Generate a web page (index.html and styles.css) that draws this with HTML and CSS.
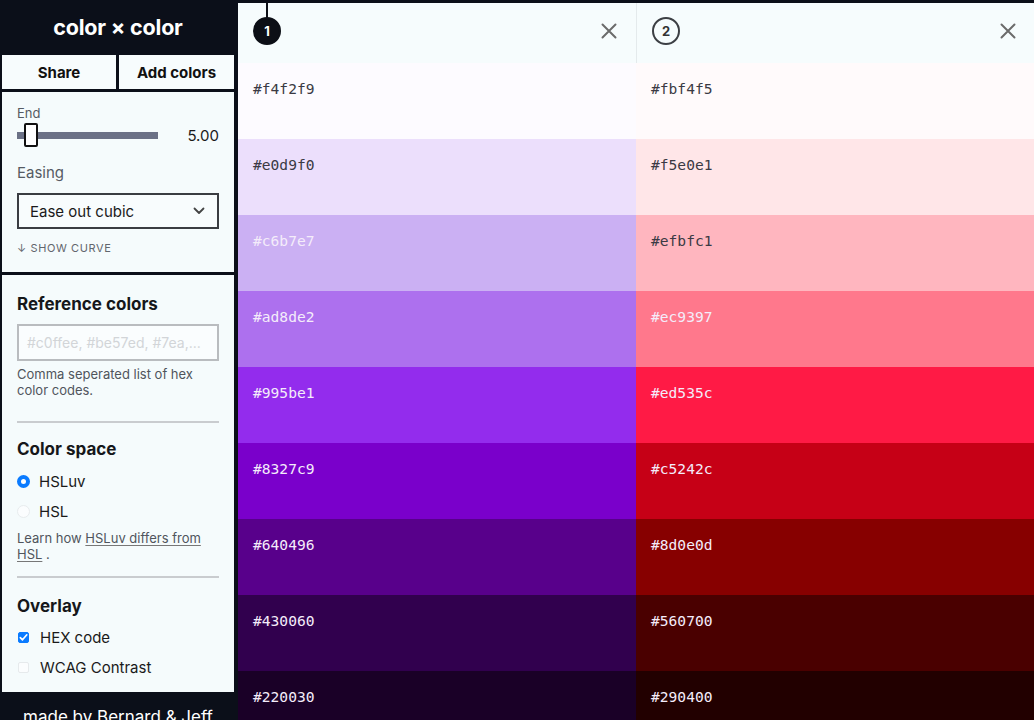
FILE: index.html
```html
<!DOCTYPE html>
<html lang="en">
<head>
<meta charset="utf-8">
<title>color × color</title>
<link rel="stylesheet" href="styles.css">
</head>
<body>
<div class="app">
  <aside class="sidebar">
    <h1 class="title">color × color</h1>
    <div class="actions">
      <button class="btn">Share</button>
      <button class="btn">Add colors</button>
    </div>
    <section class="panel panel-top">
      <div class="label-sm">End</div>
      <div class="slider-row">
        <div class="slider">
          <div class="track"></div>
          <div class="thumb"></div>
        </div>
        <span class="slider-value">5.00</span>
      </div>
      <div class="label">Easing</div>
      <div class="select">
        <span>Ease out cubic</span>
        <svg class="chevron" width="12" height="8" viewBox="0 0 12 8"><path d="M1.5 1.5 L6 6 L10.5 1.5" fill="none" stroke="#444" stroke-width="1.8" stroke-linecap="round" stroke-linejoin="round"/></svg>
      </div>
      <div class="show-curve">↓ SHOW CURVE</div>
    </section>
    <section class="panel panel-bottom">
      <h2 class="heading">Reference colors</h2>
      <div class="input">#c0ffee, #be57ed, #7ea,...</div>
      <p class="help help-input">Comma seperated list of hex color codes.</p>
      <hr class="rule rule-first">
      <h2 class="heading heading-sub">Color space</h2>
      <label class="option first-option"><span class="radio on"></span>HSLuv</label>
      <label class="option"><span class="radio"></span>HSL</label>
      <p class="help help-link">Learn how <a class="link">HSLuv differs from HSL</a> .</p>
      <hr class="rule rule-second">
      <h2 class="heading heading-overlay">Overlay</h2>
      <label class="option overlay-option"><span class="check on"><svg width="11" height="11" viewBox="0 0 11 11"><path d="M2.3 5.6 L4.5 7.8 L8.8 2.8" fill="none" stroke="#fff" stroke-width="1.7" stroke-linecap="round" stroke-linejoin="round"/></svg></span>HEX code</label>
      <label class="option"><span class="check"></span>WCAG Contrast</label>
    </section>
    <div class="footer">made by Bernard &amp; Jeff</div>
  </aside>
  <main class="main">
    <div class="column">
      <div class="col-head">
        <span class="badge active">1</span>
        <svg class="close" width="16" height="16" viewBox="0 0 16 16"><path d="M1.5 1.5 L14.5 14.5 M14.5 1.5 L1.5 14.5" stroke="#6b6b6b" stroke-width="2" stroke-linecap="round"/></svg>
      </div>
      <div class="swatch c1-1 dark-text">#f4f2f9</div>
      <div class="swatch c1-2 dark-text">#e0d9f0</div>
      <div class="swatch c1-3 light-text">#c6b7e7</div>
      <div class="swatch c1-4 light-text">#ad8de2</div>
      <div class="swatch c1-5 light-text">#995be1</div>
      <div class="swatch c1-6 light-text">#8327c9</div>
      <div class="swatch c1-7 light-text">#640496</div>
      <div class="swatch c1-8 light-text">#430060</div>
      <div class="swatch c1-9 light-text">#220030</div>
    </div>
    <div class="column second">
      <div class="col-head">
        <span class="badge">2</span>
        <svg class="close" width="16" height="16" viewBox="0 0 16 16"><path d="M1.5 1.5 L14.5 14.5 M14.5 1.5 L1.5 14.5" stroke="#6b6b6b" stroke-width="2" stroke-linecap="round"/></svg>
      </div>
      <div class="swatch c2-1 dark-text">#fbf4f5</div>
      <div class="swatch c2-2 dark-text">#f5e0e1</div>
      <div class="swatch c2-3 dark-text">#efbfc1</div>
      <div class="swatch c2-4 light-text">#ec9397</div>
      <div class="swatch c2-5 light-text">#ed535c</div>
      <div class="swatch c2-6 light-text">#c5242c</div>
      <div class="swatch c2-7 light-text">#8d0e0d</div>
      <div class="swatch c2-8 light-text">#560700</div>
      <div class="swatch c2-9 light-text">#290400</div>
    </div>
  </main>
</div>
</body>
</html>
```

FILE: styles.css
```css
* { box-sizing: border-box; }
html, body { margin: 0; padding: 0; }
body {
  background: #0b0f19;
  font-family: Inter, "Noto Sans", "Liberation Sans", sans-serif;
  color: #1a1a1a;
  width: 1034px;
  height: 720px;
  overflow: hidden;
}
.app {
  display: flex;
  gap: 2px;
  height: 720px;
}
.sidebar {
  width: 236px;
  flex: none;
  padding: 0 2px;
  display: flex;
  flex-direction: column;
}
.sidebar > * { flex: none; }
.title {
  margin: 0;
  height: 55px;
  display: flex;
  align-items: center;
  justify-content: center;
  color: #fff;
  font-size: 21.5px;
  font-weight: 700;
  letter-spacing: -0.2px;
  padding-bottom: 2px;
}
.actions {
  display: grid;
  grid-template-columns: 114px 115px;
  gap: 3px;
  height: 34px;
}
.btn {
  border: 0;
  background: #f7fcfd;
  font-family: inherit;
  font-size: 15px;
  font-weight: 700;
  color: #111;
  padding: 0;
}
.panel {
  background: #f5fbfc;
  margin-top: 3px;
  padding: 0 15px;
}
.panel-top {
  height: 180px;
  padding-top: 13px;
}
.label-sm {
  font-size: 13px;
  color: #555b63;
  line-height: 16px;
}
.slider-row {
  display: flex;
  align-items: center;
  justify-content: space-between;
  height: 26px;
  margin-top: 1px;
}
.slider {
  position: relative;
  width: 141px;
  height: 26px;
  display: flex;
  align-items: center;
}
.track {
  width: 100%;
  height: 7px;
  background: #6b7186;
}
.thumb {
  position: absolute;
  left: 7px;
  top: 1px;
  width: 14px;
  height: 24px;
  background: #fff;
  border: 2px solid #111;
  border-radius: 2px;
}
.slider-value {
  font-size: 15px;
  color: #1a1a1a;
}
.label {
  font-size: 15px;
  color: #555b63;
  margin-top: 15px;
  line-height: 20px;
}
.select {
  margin-top: 10px;
  height: 36px;
  border: 2px solid #3a3d42;
  background: #f8fcfd;
  display: flex;
  align-items: center;
  justify-content: space-between;
  padding: 0 12px 0 11px;
  font-size: 15px;
  color: #1a1a1a;
}
.show-curve {
  margin-top: 12px;
  font-size: 11px;
  letter-spacing: 0.6px;
  color: #62666d;
}
.panel-bottom {
  height: 417px;
  padding-top: 18px;
}
.heading {
  margin: 0;
  font-size: 17px;
  font-weight: 700;
  color: #15171a;
  line-height: 22px;
}
.heading-sub { margin-top: 15px; }
.heading-overlay { margin-top: 17px; }
.input {
  margin-top: 9px;
  height: 37px;
  border: 2px solid #b9bcbf;
  background: #fafdfe;
  display: flex;
  align-items: center;
  padding: 0 8px;
  font-size: 14px;
  color: #d2d5d8;
  white-space: nowrap;
  overflow: hidden;
}
.help {
  margin: 0;
  font-size: 13px;
  line-height: 16px;
  color: #50555c;
}
.help-input { margin-top: 5px; }
.help-link { margin-top: 4px; }
.link {
  color: #50555c;
  text-decoration: underline;
  text-decoration-color: #777;
  text-underline-offset: 2px;
}
.rule {
  border: 0;
  border-top: 2px solid #c9cccf;
  margin: 0;
}
.rule-first { margin-top: 23px; }
.rule-second { margin-top: 14px; }
.option {
  display: flex;
  align-items: center;
  font-size: 15px;
  color: #1a1a1a;
  height: 30px;
}
.first-option { margin-top: 6px; }
.overlay-option { margin-top: 5px; }
.radio {
  width: 13px;
  height: 13px;
  border-radius: 50%;
  border: 1px solid #e8ecee;
  background: #fbfdfe;
  margin: 0 9px 0 0;
  flex: none;
}
.radio.on {
  border: 4px solid #0a7bff;
  background: #fff;
}
.check {
  width: 11px;
  height: 11px;
  border-radius: 2px;
  border: 1px solid #e6eaec;
  background: #fbfdfe;
  margin: 0 11px 0 1px;
  flex: none;
  display: flex;
}
.check.on {
  background: #0a7bff;
  border-color: #0a7bff;
}
.check svg { margin: -1px; }
.footer {
  color: #fff;
  font-size: 17px;
  line-height: 22px;
  text-align: center;
  margin-top: 14px;
  white-space: nowrap;
}
.main {
  flex: 1;
  display: flex;
  margin-top: 3px;
  min-width: 0;
}
.column {
  flex: 1;
  display: flex;
  flex-direction: column;
  min-width: 0;
}
.col-head {
  height: 60px;
  flex: none;
  background: #f6fcfd;
  display: flex;
  justify-content: space-between;
  align-items: flex-start;
  padding: 14px 19px 0 15px;
}
.second .col-head {
  border-left: 1px solid #e4eaec;
  padding: 14px 18px 0 15px;
}
.badge {
  position: relative;
  width: 28px;
  height: 28px;
  border-radius: 50%;
  border: 2px solid #3c3f44;
  display: flex;
  align-items: center;
  justify-content: center;
  font-size: 13px;
  font-weight: 700;
  color: #333;
}
.badge.active {
  background: #0c0f16;
  border-color: #0c0f16;
  color: #fff;
}
.badge.active::before {
  content: "";
  position: absolute;
  left: 11px;
  bottom: 100%;
  width: 2px;
  height: 17px;
  background: #0c0f16;
}
.close { margin-top: 6px; }
.swatch {
  height: 76px;
  flex: none;
  padding: 16px 15px 0;
  font-family: "DejaVu Sans Mono", "Liberation Mono", monospace;
  font-size: 14.6px;
  line-height: 20px;
}
.dark-text { color: #3b3a44; }
.light-text { color: #f4ecfa; }
.c1-1 { background: #fdfbff; }
.c1-2 { background: #ecdffc; }
.c1-3 { background: #cbb0f3; }
.c1-4 { background: #ad70ee; }
.c1-5 { background: #932ced; }
.c1-6 { background: #7a00cb; }
.c1-7 { background: #58008b; }
.c1-8 { background: #31004e; }
.c1-9 { background: #1a0027; }
.c2-1 { background: #fffafb; }
.c2-2 { background: #ffe6e8; }
.c2-3 { background: #ffb6bf; }
.c2-4 { background: #ff788c; }
.c2-5 { background: #ff1a45; }
.c2-6 { background: #c60016; }
.c2-7 { background: #870000; }
.c2-8 { background: #4a0000; }
.c2-9 { background: #220000; }
```
